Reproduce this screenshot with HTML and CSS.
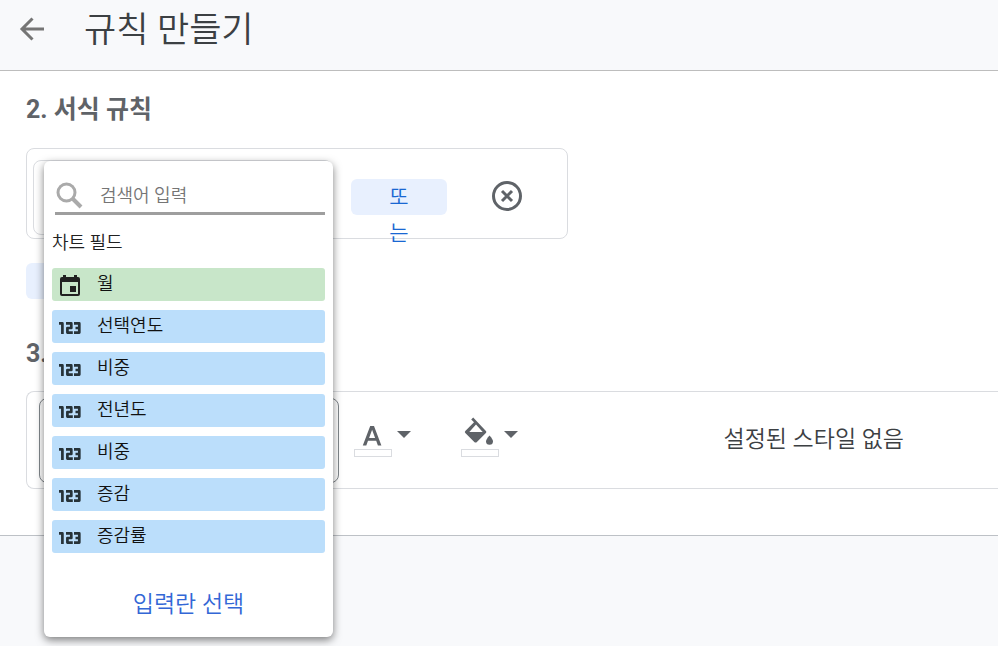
FILE: index.html
```html
<!DOCTYPE html>
<html lang="ko">
<head>
<meta charset="UTF-8">
<meta name="viewport" content="width=device-width, initial-scale=1.0">
<title>규칙 만들기</title>
<link rel="stylesheet" href="styles.css">
</head>
<body>
<svg class="sprite" aria-hidden="true">
<symbol id="icon-number" viewBox="0 0 22 12">
<path d="M0 1.400H3.400V12M7 1.400H12.300V6H8.400V10.600H13.800M15 1.400H20.300V10.600H15M16.500 6H20.300" fill="none" stroke="currentColor" stroke-width="2.700" stroke-linejoin="round"/>
</symbol>
</svg>

<header class="top-bar">
<button class="icon-button" aria-label="뒤로">
<svg width="24" height="24" viewBox="0 0 24 24"><path d="M24 12H2.500M12.500 1.500L2 12L12.500 22.500" fill="none" stroke="#757575" stroke-width="3"/></svg>
</button>
<h1>규칙 만들기</h1>
</header>

<main>
<h2>2. 서식 규칙</h2>
<section class="rule-box">
<div class="condition"></div>
<button class="or-button"><span>또는</span></button>
<button class="icon-button" aria-label="삭제">
<svg width="30" height="30" viewBox="0 0 30 30" fill="none" stroke="#5f6368" stroke-width="3"><circle cx="15" cy="15" r="13.500"/><path d="M10 10L20 20M20 10L10 20"/></svg>
</button>

<!-- Field picker -->
<div class="picker">
<div class="search">
<svg width="27" height="27" viewBox="0 0 27 27" fill="none" stroke="#aaa"><circle cx="10.500" cy="10.500" r="8.500" stroke-width="3"/><path d="M16.500 16.500L25 25" stroke-width="4"/></svg>
<input type="text" placeholder="검색어 입력" aria-label="검색어 입력">
</div>
<h3>차트 필드</h3>
<ul class="fields">
<li><button class="field date">
<svg width="22" height="22" viewBox="0 0 22 22" fill="currentColor"><path fill-rule="evenodd" d="M4 0h3v2h8V0h3v2h1a2 2 0 0 1 2 2v15a2 2 0 0 1-2 2H3a2 2 0 0 1-2-2V4a2 2 0 0 1 2-2h1zM3 7v12h16V7z"/><path d="M11 11h6v6h-6z"/></svg>
<span>월</span></button></li>
<li><button class="field"><svg width="22" height="12"><use href="#icon-number"/></svg><span>선택연도</span></button></li>
<li><button class="field"><svg width="22" height="12"><use href="#icon-number"/></svg><span>비중</span></button></li>
<li><button class="field"><svg width="22" height="12"><use href="#icon-number"/></svg><span>전년도</span></button></li>
<li><button class="field"><svg width="22" height="12"><use href="#icon-number"/></svg><span>비중</span></button></li>
<li><button class="field"><svg width="22" height="12"><use href="#icon-number"/></svg><span>증감</span></button></li>
<li><button class="field"><svg width="22" height="12"><use href="#icon-number"/></svg><span>증감률</span></button></li>
</ul>
<button class="select-input">입력란 선택</button>
</div>
</section>
<button class="add-button" aria-label="추가"></button>

<h2>3.</h2>
<section class="style-box">
<div class="preset"></div>
<button class="color-button" aria-label="글꼴 색상">
<span class="swatch">
<svg width="38" height="30" viewBox="0 0 38 30"><path fill="#5f6368" fill-rule="evenodd" d="M16.200 7h3.800l7.400 19.500h-3.500l-1.700-4.700h-8.200l-1.700 4.700h-3.500zM18.100 10.800l-3 8.200h6z"/></svg>
</span>
<span class="arrow"></span>
</button>
<button class="color-button" aria-label="배경 색상">
<span class="swatch">
<svg width="38" height="30" viewBox="0 0 38 30"><path fill="#5f6368" fill-rule="evenodd" d="M12.200 -1.500L10.200 0.500L13 3.300L4.300 12q-1 1 0 2l9 9q1.300 1.200 2.600 0l9-9q1-1 0-2zM15 5.500L21.700 13H8.300z"/><path fill="#5f6368" d="M28.500 16.500q3.500 4 3.500 5.700a3.500 3.500 0 0 1-7 0q0-1.700 3.500-5.700z"/></svg>
</span>
<span class="arrow"></span>
</button>
<p>설정된 스타일 없음</p>
</section>
</main>
</body>
</html>
```
FILE: styles.css
```css
*,
*::after {
box-sizing: border-box;
}

body {
min-height: 100vh;
margin: 0;
padding-bottom: 110px;
background-color: #f8f9fb;
color: #3c4043;
font-family: Roboto, "Noto Sans CJK KR", sans-serif;
font-weight: 350;
}

h1, h2, h3, p, ul {
margin: 0;
padding: 0;
}

button {
border: none;
padding: 0;
background: none;
color: inherit;
font: inherit;
cursor: pointer;
}

svg {
display: block;
overflow: visible;
flex-shrink: 0;
}

.sprite {
position: absolute;
width: 0;
height: 0;
}

.top-bar {
display: flex;
align-items: center;
gap: 40px;
height: 70px;
padding: 0 20px 12px;
}

h1 {
padding-top: 4px;
font-size: 35px;
line-height: 40px;
font-weight: 350;
}

main {
padding: 21px 0 46px 26px;
background-color: #fff;
border-top: 1px solid #bdbdbd;
border-bottom: 1px solid #bdc1c6;
}

h2 {
font-size: 25px;
line-height: 36px;
font-weight: 700;
color: #5f6368;
}

.rule-box {
position: relative;
display: flex;
align-items: center;
width: 542px;
height: 91px;
margin-top: 20px;
padding-left: 6px;
border: 1px solid #dadce0;
border-radius: 8px;
}

.condition {
width: 300px;
height: 75px;
margin: 8px 18px 0 0;
border: 1px solid #dadce0;
border-radius: 8px;
}

.or-button {
width: 96px;
height: 36px;
margin: 6px 45px 0 0;
padding: 0 38px;
border-radius: 6px;
background-color: #e8f0fe;
color: #1967d2;
font-size: 21px;
line-height: 36px;
}

/* the label wraps and runs out of the button */
.or-button span {
display: block;
width: 20px;
height: 36px;
word-break: break-all;
}

.rule-box > .icon-button {
margin-top: 4px;
}

.add-button {
display: block;
width: 120px;
height: 36px;
margin: 24px 0 37px;
border-radius: 6px;
background-color: #e8f0fe;
}

/* Picker */
.picker {
position: absolute;
z-index: 1;
top: 12px;
left: 17px;
width: 289px;
padding: 12px 8px;
border-radius: 6px;
background-color: #fff;
color: #212121;
box-shadow: 0 3px 8px rgba(0, 0, 0, 0.5);
}

.search {
display: flex;
align-items: center;
gap: 17px;
height: 42px;
margin-left: 3px;
padding: 6px 0 0 1px;
border-bottom: 3px solid #9e9e9e;
}

.search input {
width: 100%;
min-width: 0;
border: none;
outline: none;
padding: 0;
background: none;
font: inherit;
font-size: 18px;
}

.search input::placeholder {
color: #757575;
}

h3 {
margin: 14px 0 11px;
font-size: 18px;
line-height: 28px;
font-weight: 350;
}

.fields {
display: grid;
gap: 9px;
list-style: none;
}

.field {
display: flex;
align-items: center;
gap: 16px;
width: 100%;
height: 33px;
padding: 0 7px;
border-radius: 3px;
background-color: #bbdefb;
color: #111;
font-size: 18px;
line-height: 28px;
}

.field span {
padding-bottom: 2px;
}

.field svg {
margin-top: 2px;
color: #263238;
}

.field.date {
background-color: #c8e6c9;
}

.field.date svg {
color: #212121;
}

.select-input {
display: block;
margin: 32px auto 0;
color: #3367d6;
font-size: 23px;
line-height: 40px;
}

/* Style row, runs on past the right edge */
.style-box {
display: flex;
align-items: center;
height: 98px;
margin-top: 19px;
padding-left: 12px;
border: 1px solid #dadce0;
border-right: none;
border-radius: 8px 0 0 8px;
}

.preset {
width: 300px;
height: 85px;
margin-right: 15px;
border: 1px solid #80868b;
border-radius: 8px;
}

.color-button {
display: flex;
align-items: center;
gap: 5px;
margin: 0 50px 4px 0;
}

.swatch::after {
content: "";
display: block;
width: 38px;
height: 8px;
border: 1px solid #dadce0;
}

.arrow {
margin-bottom: 8px;
border: 7px solid transparent;
border-top-color: #5f6368;
border-bottom: none;
}

.style-box p {
margin-left: auto;
padding-right: 94px;
font-size: 23px;
line-height: 38px;
}
```
